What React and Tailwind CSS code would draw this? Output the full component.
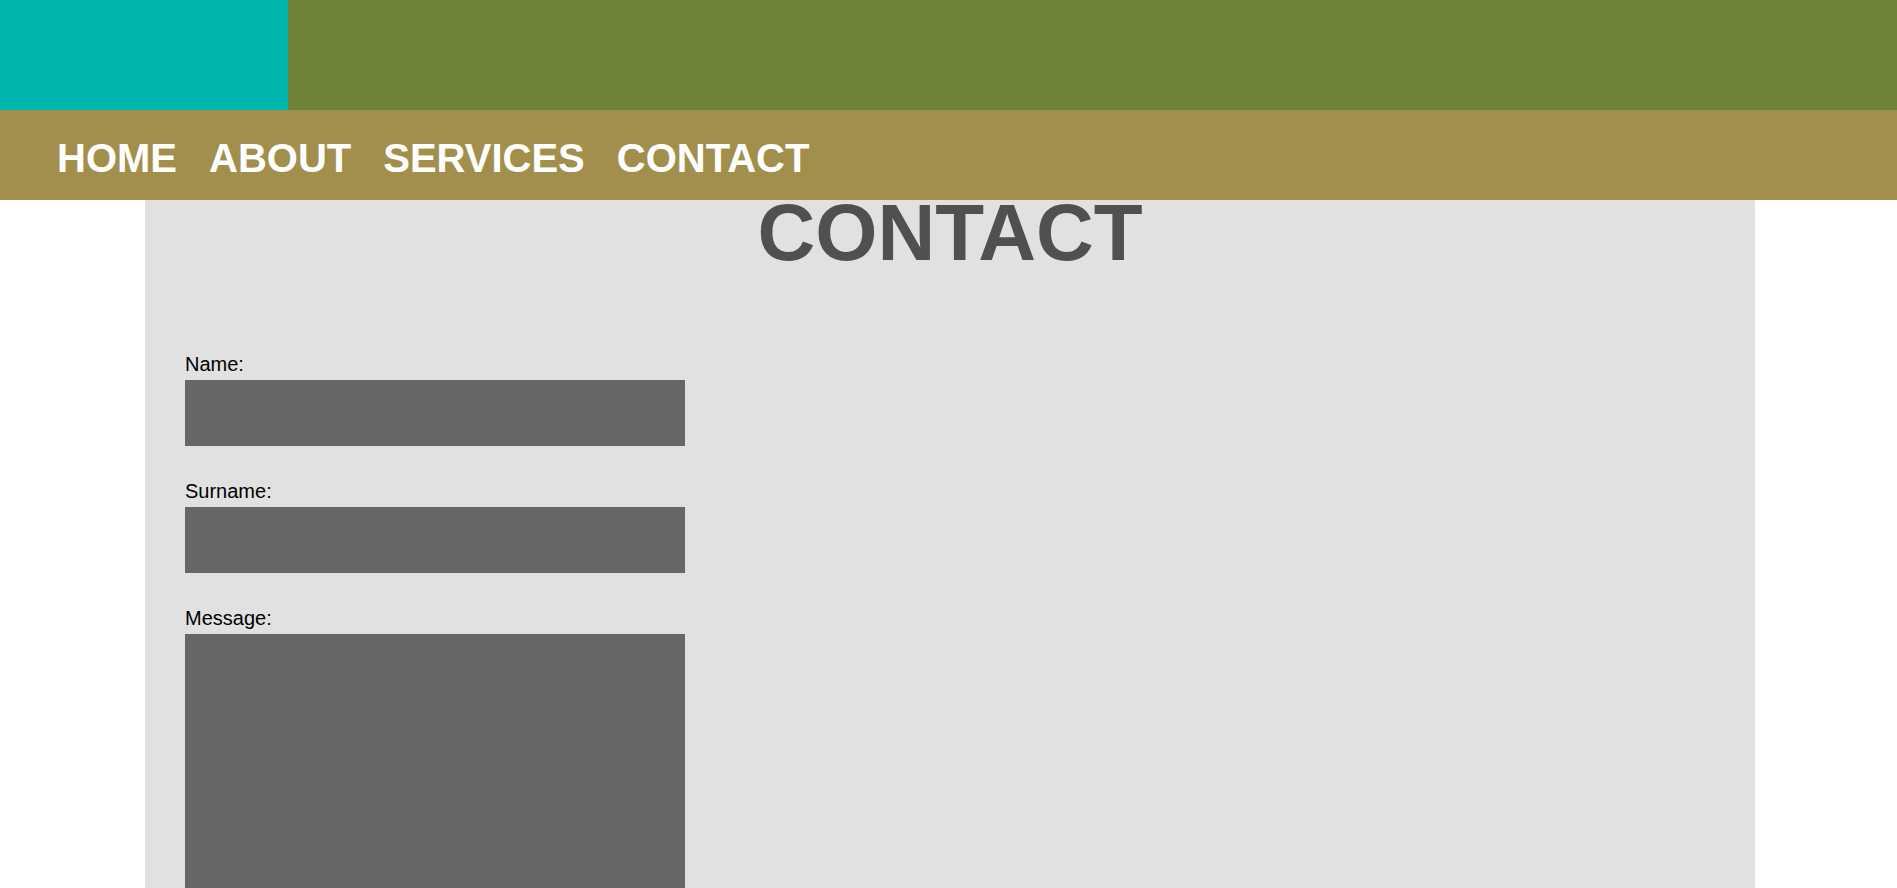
export default function App() {
  const links = ['HOME', 'ABOUT', 'SERVICES', 'CONTACT'];
  const fields = [
    { id: 'name', label: 'Name:' },
    { id: 'surname', label: 'Surname:' },
  ];

  return (
    <div className="min-h-screen bg-white font-['Liberation_Sans',Arial,sans-serif]">
      <header>
        <div className="flex h-[110px]">
          <div className="w-[288px] bg-[#00b7ae]"></div>
          <div className="flex-1 bg-[#6e8338]"></div>
        </div>
        <nav className="h-[90px] bg-[#a38f4c] pl-[57px] pt-[25px]">
          <ul className="flex gap-[32px]">
            {links.map(link => (
              <li key={link}>
                <a href="#" className="text-[40px] leading-[46px] font-bold text-white">{link}</a>
              </li>
            ))}
          </ul>
        </nav>
      </header>

      <main className="ml-[145px] w-[1610px] bg-[#e1e1e1] pb-10">
        <h1 className="text-center text-[80px] leading-[66px] font-bold text-[#505050]">CONTACT</h1>

        <form className="pl-[40px] pt-[87px]">
          {fields.map(field => (
            <div key={field.id} className="mb-[34px]">
              <label htmlFor={field.id} className="block text-[20px] leading-[23px] text-black mb-[4px]">{field.label}</label>
              <input id={field.id} type="text" className="block w-[500px] h-[66px] border-0 bg-[#666666] outline-none" />
            </div>
          ))}
          <div>
            <label htmlFor="message" className="block text-[20px] leading-[23px] text-black mb-[4px]">Message:</label>
            <textarea id="message" className="block w-[500px] h-[400px] border-0 bg-[#666666] outline-none resize-none"></textarea>
          </div>
        </form>
      </main>
    </div>
  );
}
